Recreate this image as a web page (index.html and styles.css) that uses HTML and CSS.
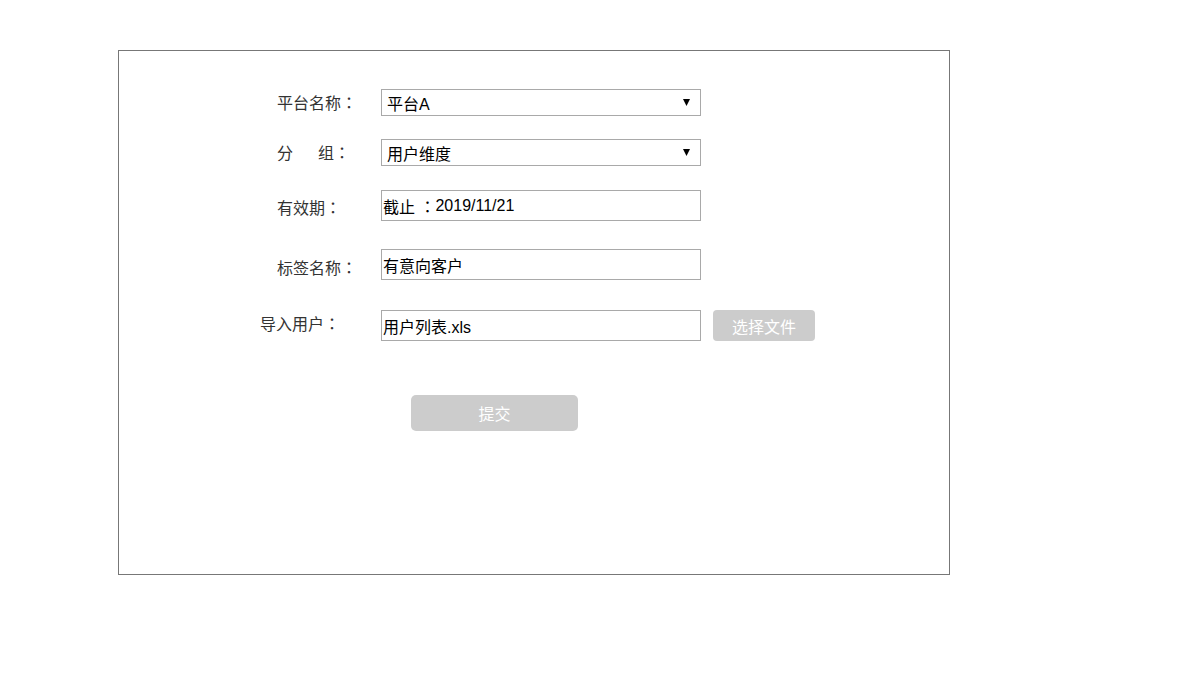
FILE: index.html
```html
<!DOCTYPE html>
<html>
<head>
<meta charset="utf-8">
<link rel="stylesheet" href="styles.css">
</head>
<body>
<div class="panel">
  <div class="row row-1">
    <label class="lbl">平台名称<span class="colon">：</span></label>
    <div class="select"><span>平台A</span><svg class="arrow" width="7" height="7" viewBox="0 0 7 7"><path d="M0 0H7L3.5 7Z" fill="#000"/></svg></div>
  </div>
  <div class="row row-2">
    <label class="lbl"><span class="sp">分</span>组<span class="colon">：</span></label>
    <div class="select"><span>用户维度</span><svg class="arrow" width="7" height="7" viewBox="0 0 7 7"><path d="M0 0H7L3.5 7Z" fill="#000"/></svg></div>
  </div>
  <div class="row row-3">
    <label class="lbl">有效期<span class="colon">：</span></label>
    <div class="input">截止 <span class="colon">：</span>2019/11/21</div>
  </div>
  <div class="row row-4">
    <label class="lbl">标签名称<span class="colon">：</span></label>
    <div class="input">有意向客户</div>
  </div>
  <div class="row row-5">
    <label class="lbl lbl-wide">导入用户<span class="colon">：</span></label>
    <div class="input">用户列表.xls</div>
    <button class="btn btn-file">选择文件</button>
  </div>
  <div class="submit-row">
    <button class="btn btn-submit">提交</button>
  </div>
</div>
</body>
</html>
```
FILE: styles.css
```css
html, body {
  margin: 0;
  padding: 0;
  background: #fff;
  font-family: "Liberation Sans", "Noto Sans CJK SC", sans-serif;
}
.panel {
  box-sizing: border-box;
  margin: 50px 0 0 118px;
  width: 832px;
  height: 525px;
  border: 1px solid #777;
  padding-top: 38px;
}
.row {
  display: flex;
  align-items: center;
}
.lbl {
  box-sizing: border-box;
  width: 262px;
  padding-left: 158px;
  font-size: 16px;
  color: #333;
  line-height: 20px;
  white-space: nowrap;
}
.colon {
  font-family: "Noto Sans CJK TC", "Noto Sans CJK SC", sans-serif;
}
.lbl-wide {
  padding-left: 141px;
}
.sp {
  margin-right: 25px;
}
.row-1 { margin-bottom: 23px; }
.row-2 { margin-bottom: 24px; }
.row-3 { margin-bottom: 28px; }
.row-4 { margin-bottom: 30px; }
.row-3 .lbl { position: relative; top: 2px; }
.row-4 .lbl { position: relative; top: 3px; }
.row-5 .lbl { position: relative; top: -2px; }
.select {
  box-sizing: border-box;
  width: 320px;
  height: 27px;
  border: 1px solid #a9a9a9;
  display: flex;
  align-items: center;
  justify-content: space-between;
  padding: 0 10px 0 5px;
  font-size: 16px;
  color: #000;
}
.arrow {
  display: block;
}
.input {
  box-sizing: border-box;
  width: 320px;
  height: 31px;
  border: 1px solid #a9a9a9;
  display: flex;
  align-items: center;
  padding: 1px 1px 0 1px;
  font-size: 16px;
  color: #000;
  white-space: pre;
}
.btn {
  border: none;
  background: #ccc;
  color: #fff;
  font-family: "Liberation Sans", "Noto Sans CJK SC", sans-serif;
  font-size: 16px;
  border-radius: 4px;
  padding: 0;
}
.btn-file {
  margin-left: 12px;
  width: 102px;
  height: 31px;
}
.submit-row {
  padding-left: 292px;
  margin-top: 54px;
}
.btn-submit {
  width: 167px;
  height: 36px;
  border-radius: 5px;
}
```
